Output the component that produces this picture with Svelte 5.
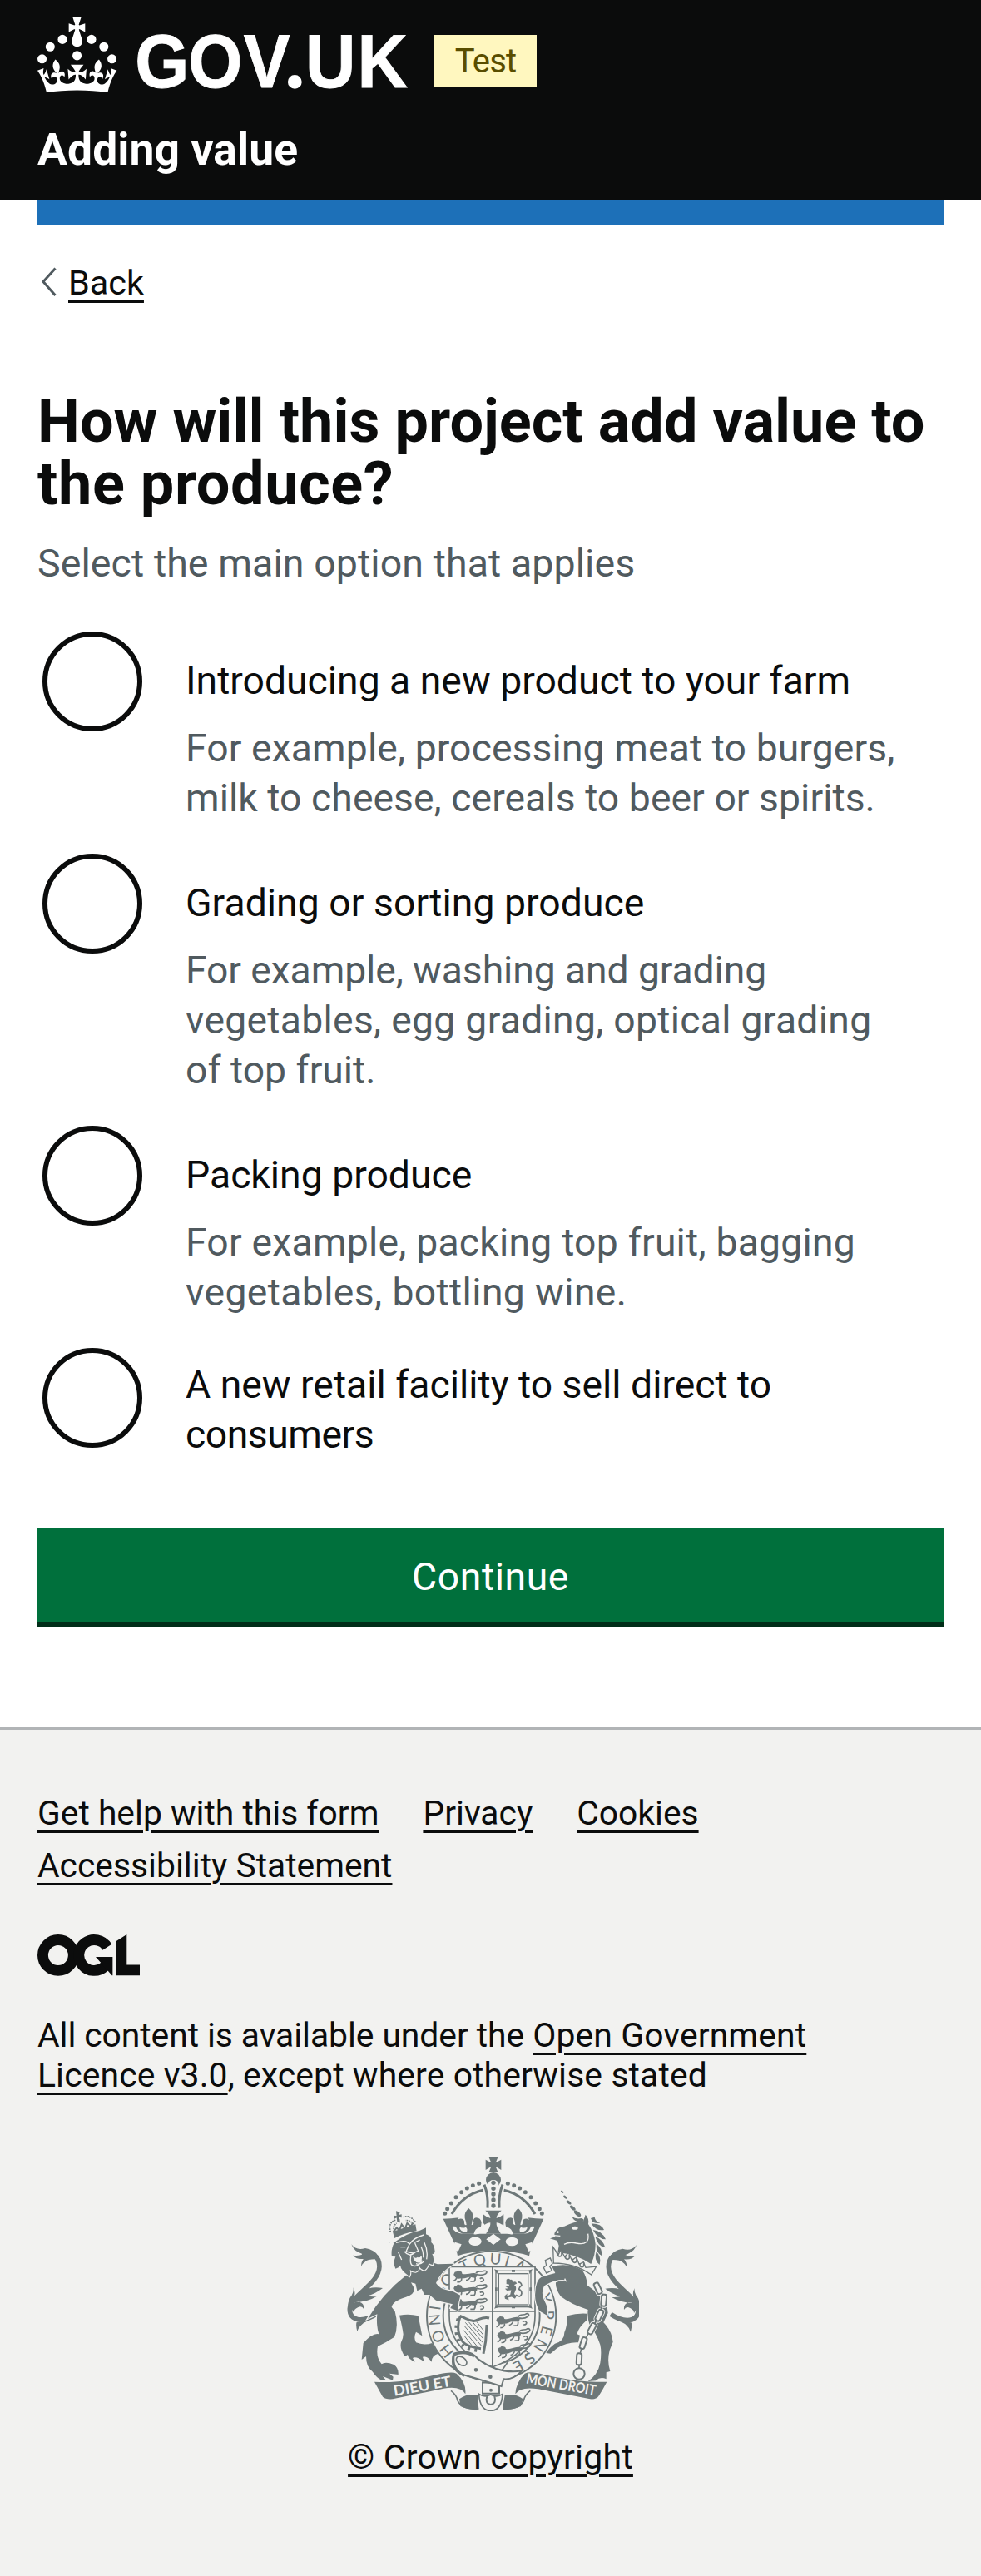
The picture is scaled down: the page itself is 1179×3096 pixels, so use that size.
<script>
  // Each line carries its text and an optional tracking value in pixels.
  const options = [
    {
      label: [['Introducing a new product to your farm', 0]],
      hint: [['For example, processing meat to burgers,', 0.1], ['milk to cheese, cereals to beer or spirits.', 0.05]]
    },
    {
      label: [['Grading or sorting produce', 0.05]],
      hint: [['For example, washing and grading', -0.1], ['vegetables, egg grading, optical grading', 0.28], ['of top fruit.', 0]]
    },
    {
      label: [['Packing produce', 0]],
      hint: [['For example, packing top fruit, bagging', 0.22], ['vegetables, bottling wine.', 0.38]]
    },
    { label: [['A new retail facility to sell direct to', 0], ['consumers', -0.45]], hint: [] }
  ];

  const footerLinks = ['Get help with this form', 'Privacy', 'Cookies', 'Accessibility Statement'];

  // Motto letters on the garter: [letter, degrees clockwise from the top]
  const motto = [
    ['H', 232], ['O', 249], ['N', 266], ['I', 278], ['S', 297], ['O', 309], ['T', 332],
    ['Q', 348], ['U', 4], ['I', 16], ['A', 30], ['Y', 72], ['P', 89], ['E', 105],
    ['N', 121], ['S', 138], ['E', 152]
  ];

  const pearls = [[527, 163], [505, 170], [484, 180], [464, 194], [444, 212], [427, 234], [413, 254], [404, 271]];
  const hornParts = [[827, 193, 6], [838, 212, 8], [851, 231, 10], [865, 251, 12], [882, 271, 15]];
  const links = [[956, 541, -25], [977, 584, 5], [961, 638, 25], [934, 686, 28], [903, 738, 18], [888, 796, 3]];
</script>

<header>
  <div class="brand">
    <svg class="logo" viewBox="0 0 300 60" role="img" aria-label="GOV.UK">
      <circle cx="20" cy="17.6" r="3.7" /><circle cx="10.2" cy="23.5" r="3.7" /><circle cx="3.7" cy="33.2" r="3.7" />
      <circle cx="31.7" cy="30.6" r="3.7" /><circle cx="43.3" cy="17.6" r="3.7" /><circle cx="53.2" cy="23.5" r="3.7" />
      <circle cx="59.7" cy="33.2" r="3.7" />
      <path d="M33.1,9.8c.2-.1.3-.3.5-.5l4.6,2.4v-6.8l-4.6,1.5c-.1-.2-.3-.3-.5-.5l1.9-5.9h-6.7l1.9,5.9c-.2.1-.3.3-.5.5l-4.6-1.5v6.8l4.6-2.4c.1.2.3.3.5.5l-2.6,8c-.9,2.8,1.2,5.7,4.1,5.7h0c3,0,5.1-2.9,4.1-5.7l-2.6-8ZM37,37.9s-3.4,3.8-4.1,6.1c2.2,0,4.2-.5,6.4-2.8l-.7,8.5c-2-2.8-4.4-4.1-5.7-3.8.1,3.1.5,6.7,5.8,7.2,3.7.3,6.7-1.5,7-3.8.4-2.6-2-4.3-3.7-1.6-1.4-4.5,2.4-6.1,4.9-3.2-1.9-4.5-1.8-7.7,2.4-10.9,3,4,2.6,7.3-1.2,11.1,2.4-1.3,6.2,0,4,4.6-1.2-2.8-3.7-2.2-4.2.2-.3,1.7.7,3.7,3,4.2,1.9.3,4.7-.9,7-5.9-1.3,0-2.4.7-3.9,1.7l2.4-8c.6,2.3,1.4,3.7,2.2,4.5.6-1.6.5-2.8,0-5.3l5,1.8c-2.6,3.6-5.2,8.7-7.3,17.5-7.4-1.1-15.7-1.7-24.5-1.7h0c-8.8,0-17.1.6-24.5,1.7-2.1-8.9-4.7-13.9-7.3-17.5l5-1.8c-.5,2.5-.6,3.7,0,5.3.8-.8,1.6-2.3,2.2-4.5l2.4,8c-1.5-1-2.6-1.7-3.9-1.7,2.3,5,5.2,6.2,7,5.9,2.3-.4,3.3-2.4,3-4.2-.5-2.4-3-3.1-4.2-.2-2.2-4.6,1.6-6,4-4.6-3.7-3.7-4.2-7.1-1.2-11.1,4.2,3.2,4.3,6.4,2.4,10.9,2.5-2.8,6.3-1.3,4.9,3.2-1.8-2.7-4.1-1-3.7,1.6.3,2.3,3.3,4.1,7,3.8,5.4-.5,5.7-4.2,5.8-7.2-1.3-.2-3.7,1-5.7,3.8l-.7-8.5c2.2,2.3,4.2,2.7,6.4,2.8-.7-2.3-4.1-6.1-4.1-6.1h10.6,0Z" />
      <text class="wordmark" y="55.7" x="84.6 130.600 178.5" transform="scale(.925 1)">GOV</text>
      <circle cx="206.2" cy="51.6" r="5.6" />
      <text class="wordmark" y="55.7" x="232 277.2" transform="scale(.925 1)">UK</text>
    </svg>
    <strong class="tag">Test</strong>
  </div>
  <div class="service">Adding value</div>
</header>
<div class="bar"></div>

<main>
  <a class="back" href="#back">
    <svg viewBox="0 0 20 36"><path d="M17.5 1.5 3 17.5 17.5 34" /></svg>
    <span>Back</span>
  </a>
  <h1>How will this project add value to <span class="second">the produce?</span></h1>
  <p class="lead">Select the main option that applies</p>

  <div class="radios">
    {#each options as option}
      <label class="option" class:tall={option.label.length > 1}>
        <span class="dial"></span>
        <span class="copy">
          {#each option.label as [text, tracking]}<span class="line" style:letter-spacing="{tracking}px">{text}</span>{/each}
          {#if option.hint.length}
            <span class="hint">
              {#each option.hint as [text, tracking]}<span class="line" style:letter-spacing="{tracking}px">{text}</span>{/each}
            </span>
          {/if}
        </span>
      </label>
    {/each}
  </div>

  <button type="button">Continue</button>
</main>

<footer>
  <ul>
    {#each footerLinks as link}<li><a href="#link">{link}</a></li>{/each}
  </ul>
  <svg class="ogl" viewBox="0 0 483.2 195.7" role="img" aria-label="Open Government Licence">
    <circle class="ring" cx="97.8" cy="97.8" r="72.4" />
    <path class="ring" d="M329.4 59.5A72.4 72.4 0 1 0 318 150" />
    <path d="M275 105.500h80v87.800h-3L299.300 133z" />
    <path d="M370.800 32.400 421.500.1v142.700h61.700v50.700H370.800z" />
  </svg>
  <p class="licence">
    <span class="lead-in">All content is available under the</span> <a href="#ogl">Open Government<br />Licence v3.0</a>, except where otherwise stated
  </p>
  <div class="crown-copyright">
    <svg class="crest" viewBox="33 66 1071 918" aria-hidden="true">
      <defs>
        <g id="leopard">
          <path d="M3 14q3-9 9-7 5-8 11-2 9-1 9 9c16 5 28-3 44-2 10 1 14 7 9 13-5 6-16 2-24 1-12 0-20 7-32 5-12 4-22-1-24-9-3-2-4-5-2-8z" />
          <path class="l5" d="M14 26q-4 12-14 14M30 30q2 10-8 14h-8M62 26q-6 12-16 12M78 24q4 10-2 18H62M84 16c10 4 22 4 34-2M82 12c8-12 20-2 30-8 10-2 12 8 4 10M96 32q10-6 14 4-2 8-12 6" />
        </g>
        <g id="tail">
          <path class="l15" d="M160 632C112 664 60 662 61 615C64 566 166 528 168 462C168 424 140 408 104 412" />
          <path d="M67 382q18 24 50 14 34 6 44 26-10 10-50 12-24 4-39-12 20 4 38-4-34-8-43-36zM102 462q0-34 36-42l24 16q-34-2-44 8-10 6-16 18zM180 540q-48-8-72 14l-36 38q50 0 86-22-16 2-32-2 28-8 54-28zM74 538q10 20 2 36l-22 32q2-28 14-40 8-14 6-28zM112 616q-8-14-22-6-14 6-14 18l-12-18q10-22 32-20 18 4 16 26zM88 696q-6-24-2-34l40-4q-30 12-38 38z" />
        </g>
      </defs>

      <!-- garter and shield -->
      <circle class="l6" cx="572" cy="640" r="233" />
      <circle class="l6" cx="572" cy="640" r="174" />
      {#each motto as [letter, angle]}
        <text class="motto" transform="translate(572 640) rotate({angle}) translate(0 -186)">{letter}</text>
      {/each}
      <path class="pale l5" d="M420 463H729V640C729 735 660 795 575 825C490 795 420 735 420 640z" />
      <path class="l4" d="M575 463V825M420 624H729" />
      <use href="#leopard" x="434" y="474" />
      <use href="#leopard" x="434" y="524" />
      <use href="#leopard" x="434" y="574" />
      <g transform="rotate(-6 650 700)">
        <use href="#leopard" x="592" y="634" />
        <use href="#leopard" x="590" y="688" />
        <use href="#leopard" x="586" y="742" />
      </g>
      <rect class="l4" x="588" y="478" width="126" height="130" />
      <rect class="l4" x="598" y="488" width="106" height="112" />
      <path d="M582 472l14 4-4 14zM720 472l-14 4 4 14zM582 614l14-4-4-14zM720 614l-14-4 4-14zM645 474h12v8h-12zM645 605h12v8h-12zM585 538h8v12h-8zM709 538h8v12h-8z" />
      <g transform="translate(650 545) scale(.86) translate(-650 -547)">
        <path d="M622 506q8-8 16 0 12-2 10 12 12-10 18 4l-12 6q10 4 8 18l-8 20 10 8-6 12-14-8-14 2 2 12-16-6-2-12 12-10-2 12 14-8 4-18-18 2-8-8 14-2-12-8 14 0 2-8-12-2z" />
        <path class="l6" d="M662 570q20 14 24-6 0-14-12-18 2-10 12-16-2-14-14-14" />
      </g>
      <path class="l9" d="M460 640q-18 48 4 86 10 24 70 32M458 640c24 8 30 20 54 18 20-6 30-16 52-10" />
      <path class="l9" d="M555 672l-4 60-8 44" />
      <path class="l12" stroke-dasharray="9 16" d="M452 650q-16 46 4 84 14 22 70 32" />
      <path class="l3" d="M478 664l62 72M490 662l52 60M504 662l38 46M518 660l26 34M474 676l62 72M472 692l52 62M474 712l30 38" />

      <!-- royal crown -->
      <path d="M562 67h34l-9 21 20-11v37l-20-12 9 21h-34l9-21-20 12V77l20 11z" />
      <circle cx="579" cy="150" r="27" />
      <path class="pale" d="M562 252q2-60-2-88 4-14 19-14t19 14q-4 28-2 88z" />
      {#each [160, 181, 201, 222, 243] as cy}<circle cx="579" {cy} r="8" />{/each}
      {#each ['', 'matrix(-1 0 0 1 1158 0)'] as transform}
        <g transform={transform || null}>
          {#each pearls as [cx, cy]}<circle {cx} {cy} r="7.500" />{/each}
          <path class="l9" d="M429 273Q468 204 541 187M546 167Q561 205 558 251" />
          <path d="M490 252q18 16 15 36-3 12-5 24 8 2 8-8-5-14 8-18 18 0 20 18 0 24-22 40h-46q-26-12-24-36 4-22 22-18 10 4 8 16 0 8 8 6-2-14-6-24-4-22 14-36z" />
          <path d="M398 290q30 0 56-4-8 14-2 34-12-4-22-2 8 26 40 26l110 0v60q-72 0-130 20l-8-38z" />
        </g>
      {/each}
      <path d="M550 260h58q-20 18-18 28 12-2 26-14v42q-14-12-26-12-2 14 16 40h-54q18-26 16-40-12 0-26 12v-42q14 12 26 14 2-10-18-28z" />
      <path class="pale" d="M550 316q-12 34-42 30 4-22 22-26 12-2 14-14zM608 316q12 34 42 30-4-22-22-26-12-2-14-14zM456 318q2 20 26 20 6-10-2-18-14 6-24-2zM702 318q-2 20-26 20-6-10 2-18 14 6 24-2z" />
      <path class="pale" d="M579 344l26 20-26 20-26-20zM440 374l24 8-12 26-20-8zM718 374l-24 8 12 26 20-8z" />
      <ellipse class="pale" cx="513" cy="371" rx="23" ry="16" /><ellipse class="pale" cx="646" cy="372" rx="23" ry="16" />

      <!-- supporters' tails -->
      <use href="#tail" />
      <use href="#tail" transform="matrix(-1 0 0 1 1162 2)" />

      <!-- lion -->
      <path class="edged" d="M262 496Q180 560 126 650l34-16q-4 40 6 72-22-6-56 32l-6 60 16-12q0 40 24 56 14 22 32 30l16 0-12-14 36 14 2-12-14-12 32 4q2-24-16-36-30-12-44-2-22-26-14-64 30-14 60-34 16-40 2-92l-12-16q4-22 52-36 30-10 30-30l-12-22 16 4 6 26 16-8 10 22 18 0 24 20 60 14-8 14 26 10 4-32 6-24q-26-16-44-18-30-4-44-26 14-40 66-70l-60 2-50-16z" />
      <path d="M240 638q36-6 68 2l14 72-22-14q-10 20 0 38 30 12 58 2l22 38q-24 6-24 30-18-24-32-18l6 18q-30-22-42-14l8 14q-24-10-26-26l-10 6q-20-26-14-50 8-14 8-30-4-30-14-68z" />
      <path class="edged" d="M204 376l22-4q40-30 88-40l22-10 0 24q24 8 18 28 12 8 14 34-2 12-10 8 10 20 2 40-12-2-14-8-2 18-16 28-14-4-18-14 0 16-14 20-12 0-20-8 4 16-2 24-34-24-32-40-6 10-18 12-10-20 0-44-8 2-14-4-2-26 10-46l-16-2z" />
      <path class="cut4" d="M228 376q40-12 48 6 16-24 52-34M276 382l-12 26 24 6 20-8-12-28M258 408q18 22 38 4M282 420q-6 30 4 38 20 10 36-18M236 410l12 28M330 376q14 30 8 60M318 390q10 20 8 40M244 392l18 0M294 376l20-10M300 452q14 6 28-8" />
      <path class="pale" d="M288 424q6 28 24 24 12-2 8-26-8 12-14 6-10 8-18-4z" />
      <path d="M216 336l82-26 4 24q-46 8-80 26zM228 262l14 4-4 10 10-2 0 12-10-2 4 16-10 0-2-14-8 4-2-12 10 2z" />
      <path class="l3 dots" d="M208 338q-10-36 20-44M298 302q-20-28-44-18M240 304q-4-10 2-14M222 336q-8-18 8-30M290 310q-12-16-28-14" />
      <path class="l6" d="M218 338l12-16 10 10 8-22 12 16 8-20 14 12 6-14" />

      <!-- unicorn -->
      <path class="edged" d="M790 462q60-16 110 14 16 24 18 54l52 40q20 28 22 60l-16 34q30 30 34 70l-12 30q-10 40 2 76l-14 4 0 24q-22-10-38 6l-28 2q36-24 44-66 6-40 0-66-14-44-36-64-12-34-8-62-62-20-98-48-20-28-18-50l18-8q-24-2-60 20-14 28 2 56 16 30 8 50l-28-16q-18-36-14-66 2-46 22-56 26-8 50-14z" />
      <path d="M845 640q34-10 70-8v24q-30 26-34 50l10 4-6 26q-40-2-76 20l-24 20-16-2q10-18 32-34 34-8 34-40 12-30 10-60z" />
      <path class="cut4" d="M760 560q6 26 20 40M790 522q30-14 50-8l-4-8" />
      <path class="edged" d="M803 335q10-18 32-18 34-18 68-18l8-24q14 14 10 34 22 30 26 72 0 40-16 72-50-34-120-42l4-24-6-18-26-8 20-6q-8-10 0-20z" />
      <path class="cut4" d="M920 344q8 44-42 34-24-6-44 4M796 350l24 2" />
      <ellipse class="pale" cx="873" cy="323" rx="11" ry="6" /><circle class="pale" cx="811" cy="338" r="4" />
      <path d="M862 282q14 10 34 6 14 4 6 12-30 6-40-18zM930 288l14-4q2 16 20 20-14 6-28-4zM932 308q34-2 46 22-26 6-46-22zM938 330q34 4 46 34-28 0-46-34zM946 354q28 10 36 40-26-4-36-40zM950 380q22 14 20 44-22-12-20-44zM950 408q20 20 12 48-22-16-12-48z" />
      {#each hornParts as [x, y, r]}<ellipse cx={x} cy={y} rx={r} ry={r * 0.5} transform="rotate(40 {x} {y})" />{/each}
      <path class="pale l4" d="M794 392l10 14 8 16 10-20 14 26 14-16 12 28 16-12 10 26 16-8 8 20 38-4-18 30q-60-42-136-42z" />
      {#each [[818, 412], [846, 422], [872, 434], [898, 450]] as [x, y]}<path class="l5" d="M{x - 7} {y}v10q7 8 14 0v-12" />{/each}
      <path class="pale l4" d="M766 440l18-8 8 20-10 10 8 14-20 10-10-20 10-8z" />

      <!-- chain -->
      {#each links as [x, y, turn]}
        <rect class="edge" x={x - 10} y={y - 23} width="20" height="46" rx="8" transform="rotate({turn} {x} {y})" />
        <rect class="l6" x={x - 9} y={y - 21} width="18" height="42" rx="7" transform="rotate({turn} {x} {y})" />
      {/each}
      <path class="l5" d="M969 558l6 12M970 604l-4 16M950 657l-7 13M921 704l-8 16M896 758l-4 18M888 816v14" />
      <circle class="l6" cx="888" cy="849" r="20" />

      <!-- strap, buckle and ribbon -->
      <path d="M150 878C250 885 340 860 385 850Q430 840 446 848Q482 880 478 922Q462 892 400 902L216 940Q190 942 180 932Q165 905 150 878zM988 878C890 882 800 860 760 852Q712 838 692 848Q660 880 658 922Q676 894 740 904L928 940Q950 942 958 930Q974 905 988 878z" />
      <path d="M456 940q30-22 66-14l4 50q-36 4-66-10zM686 940q-30-22-66-14l-8 50q36 4 66-10z" />
      <path class="l5" d="M426 910q20 14 24 36 16 32 76 30M712 910q-20 14-24 36-16 32-76 30M606 842l-40-18M606 842l24-34" />
      <path class="pale l6" d="M540 880v40h60v-36z" />
      <path class="pale l6" d="M436 776Q494 756 524 796Q600 852 682 838Q650 872 616 868L608 894Q520 866 468 852Q420 834 436 776z" />
      <path class="l9" d="M474 856q-48-24-38-76 40-16 74 6" />
      <ellipse class="l5" cx="464" cy="803" rx="21" ry="14" transform="rotate(35 464 803)" />
      <circle cx="516" cy="835" r="7" /><circle cx="568" cy="860" r="7" /><circle cx="570" cy="908" r="6" />
      <path class="pale l5" d="M527 922q20 14 42 2 22 12 43-2-4 60-43 60t-42-60z" />
      <path class="l6" d="M556 930q-8 26 13 30 22-4 14-30" />
      <text class="scroll" x="0" y="0" textLength="210" lengthAdjust="spacingAndGlyphs" transform="translate(222 929) rotate(-10)">DIEU ET</text>
      <text class="scroll" x="0" y="0" textLength="254" lengthAdjust="spacingAndGlyphs" transform="translate(695 883) rotate(10)">MON DROIT</text>
    </svg>
    <a href="#crown">© Crown copyright</a>
  </div>
</footer>

<style>
  :global(body) { margin: 0; background: #fff; }
  header, main, footer, .bar { font-family: Roboto, 'Liberation Sans', sans-serif; color: #0b0c0c; box-sizing: border-box; }
  a { color: inherit; text-decoration: underline; text-decoration-thickness: 3px; text-underline-offset: 7px; }
  p, h1, ul { margin: 0; padding: 0; }

  header { height: 240px; padding: 21px 45px 0; background: #0b0c0c; color: #fff; }
  .brand { display: flex; align-items: flex-start; gap: 27px; height: 129px; }
  .logo { width: 450px; height: 90px; fill: #fff; flex: none; overflow: visible; }
  .wordmark { font: 700 60.300px 'Liberation Sans', sans-serif; stroke: #fff; stroke-width: .6; }
  .tag { margin-top: 21px; width: 123px; height: 63px; background: #fff7bf; color: #594d00; font-size: 40px; font-weight: 400; line-height: 63px; text-align: center; letter-spacing: -.8px; }
  .service { font-size: 53.400px; line-height: 60px; font-weight: 700; letter-spacing: .1px; }
  .bar { height: 30px; margin: 0 45px; background: #1d70b8; }

  main { padding: 46px 45px 0; }
  .back { display: flex; width: max-content; font-size: 41.400px; line-height: 48px; text-decoration: none; }
  .back svg { width: 20px; height: 36px; margin: 5px 13px 0 4px; fill: none; stroke: #505a5f; stroke-width: 3; }
  .back span { text-decoration: underline; text-decoration-thickness: 3px; text-underline-offset: 7px; }
  h1 { margin-top: 105px; font-size: 72px; line-height: 75px; font-weight: 700; letter-spacing: .05px; }
  .second { letter-spacing: .6px; }
  .lead { margin-top: 28px; font-size: 46.500px; line-height: 60px; color: #505a5f; letter-spacing: .08px; }

  .radios { display: flex; flex-direction: column; gap: 37px; margin-top: 52px; font-size: 46.300px; line-height: 60px; }
  .option { display: flex; gap: 52px; padding-left: 6px; }
  .dial { flex: none; box-sizing: border-box; width: 120px; height: 120px; border: 6px solid #0b0c0c; border-radius: 50%; }
  .copy { padding-top: 29px; }
  .tall .copy { padding-top: 14px; }
  .line { display: block; white-space: nowrap; }
  .hint { display: block; margin-top: 21px; color: #505a5f; }
  button { display: block; box-sizing: border-box; width: 100%; height: 114px; margin-top: 82px; padding: 3px 0 0; border: 0; background: #00703c; box-shadow: 0 6px 0 #002d18; color: #fff; font-family: inherit; font-size: 46.300px; line-height: 60px; letter-spacing: .6px; }

  footer { margin-top: 126px; height: 1020px; padding: 76px 45px 0; border-top: 3px solid #b1b4b6; background: #f2f2f0; font-size: 40.900px; line-height: 48px; }
  ul { display: flex; flex-wrap: wrap; gap: 15px 53px; width: 900px; list-style: none; font-size: 40.800px; }
  .ogl { display: block; width: 123px; height: 50px; margin-top: 59px; fill: #0b0c0c; }
  .ring { fill: none; stroke: #0b0c0c; stroke-width: 50.700; }
  .licence { margin-top: 47px; letter-spacing: .1px; }
  .lead-in { letter-spacing: -.1px; }
  .crown-copyright { display: flex; flex-direction: column; align-items: center; margin-top: 74px; }
  .crown-copyright a { margin-top: 31px; letter-spacing: .25px; }

  .crest { display: block; width: 357px; height: 306px; fill: #6d7778; }
  .crest .l3, .crest .l4, .crest .l5, .crest .l6, .crest .l9, .crest .l12, .crest .l15 { fill: none; stroke: #6d7778; }
  .crest .l3 { stroke-width: 3; }
  .crest .l4 { stroke-width: 4; }
  .crest .l5 { stroke-width: 5; }
  .crest .l6 { stroke-width: 6; }
  .crest .l9 { stroke-width: 9; }
  .crest .l12 { stroke-width: 12; }
  .crest .l15 { stroke-width: 17; }
  .crest .dots { stroke-width: 5; stroke-dasharray: 5 3; }
  .crest .pale { fill: #f2f2f0; }
  .crest .edged { stroke: #f2f2f0; stroke-width: 7; paint-order: stroke; }
  .crest .edge { fill: #f2f2f0; stroke: #f2f2f0; stroke-width: 9; }
  .crest .cut4 { fill: none; stroke: #f2f2f0; stroke-width: 4; }
  .motto { font: 400 56px Lato, sans-serif; text-anchor: middle; }
  .scroll { font: 700 52px Lato, sans-serif; fill: #f2f2f0; }
</style>
